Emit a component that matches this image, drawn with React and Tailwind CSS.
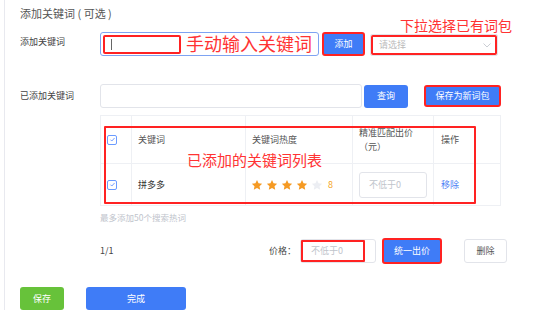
import React from "react";

const Star = ({ fill }) => (
  <svg width="12" height="12" viewBox="0 0 24 24">
    <path
      d="M12 1.8l3.1 6.6 7.2.9-5.3 5 1.4 7.1L12 17.9l-6.4 3.5 1.4-7.1-5.3-5 7.2-.9z"
      fill={fill}
    />
  </svg>
);

const Check = () => (
  <div className="w-[10px] h-[10px] rounded-[2px] border border-[#6b9bff] flex items-center justify-center bg-white">
    <svg width="7" height="7" viewBox="0 0 10 10">
      <path d="M2 5.2l2 2 4-4.4" stroke="#5b8cff" strokeWidth="1.2" fill="none" />
    </svg>
  </div>
);

export default function App() {
  return (
    <div
      className="w-[537px] h-[310px] overflow-hidden bg-white relative text-[#333]"
      style={{ fontFamily: '"Noto Sans CJK SC", "Noto Sans", sans-serif' }}
    >
      <div className="ml-[4px] h-full border-l border-[#e8e9ef] pl-[15px] flex flex-col">
        {/* title */}
        <div className="h-[26px] pt-[4px] text-[11px] leading-[16px] text-[#555] flex items-center whitespace-pre">
          添加关键词 ( 可选 )
        </div>

        {/* row 1 */}
        <div className="mt-[10px] flex items-start h-[24px]">
          <div className="w-[80px] pt-[3px] text-[9px] leading-[14px] text-[#444]">添加关键词</div>
          <div className="relative w-[219px] h-[24px] rounded-[3px] border border-[#7ea3f2] bg-white">
            <div className="absolute left-[2px] top-[2px] w-[78px] h-[19px] border-2 border-[#f22] rounded-[2px]" />
            <div className="absolute left-[10px] top-[6px] w-px h-[11px] bg-[#666]" />
            <div className="absolute left-[85px] top-[0px] text-[18px] leading-[21px] text-[#f33] whitespace-nowrap">
              手动输入关键词
            </div>
          </div>
          <div className="ml-[3px] w-[43px] h-[24px] rounded-[3px] bg-[#3f7cf7] border-2 border-[#f22] text-white text-[9px] flex items-center justify-center">
            添加
          </div>
          <div className="relative ml-[5px] mt-[2px] w-[128px] h-[22px] rounded-[2px] border border-[#e2e4ea] bg-white flex items-center pl-[8px] text-[9px] text-[#bbb]">
            <div className="absolute inset-0 border-2 border-[#f22] rounded-[2px]" />
            请选择
            <svg className="absolute right-[6px] top-[8px]" width="8" height="5" viewBox="0 0 8 5">
              <path d="M0.5 0.5l3.5 3.5 3.5-3.5" stroke="#c5c8cf" strokeWidth="0.9" fill="none" />
            </svg>
            <div className="absolute left-[29px] top-[-19px] text-[14px] leading-[18px] text-[#f33] whitespace-nowrap">
              下拉选择已有词包
            </div>
          </div>
        </div>

        {/* row 2 */}
        <div className="mt-[28px] flex items-center h-[24px]">
          <div className="w-[80px] text-[9px] leading-[14px] text-[#444]">已添加关键词</div>
          <div className="w-[262px] h-[24px] rounded-[3px] border border-[#e2e4ea] bg-white" />
          <div className="ml-[2px] w-[44px] h-[23px] rounded-[3px] bg-[#3f7cf7] text-white text-[9px] flex items-center justify-center">
            查询
          </div>
          <div className="ml-[16px] w-[77px] h-[22px] rounded-[3px] bg-[#3f7cf7] border-2 border-[#f22] text-white text-[9px] flex items-center justify-center">
            保存为新词包
          </div>
        </div>

        {/* table */}
        <div className="relative mt-[7px] ml-[80px] w-[401px] border border-[#eef0f4] text-[9px]">
          <div className="flex h-[48px] border-b border-[#eef0f4] text-[#555]">
            <div className="w-[31px] border-r border-[#eef0f4] flex items-center pl-[6px]">
              <Check />
            </div>
            <div className="w-[114px] border-r border-[#eef0f4] flex items-center pl-[6px]">关键词</div>
            <div className="w-[107px] border-r border-[#eef0f4] flex items-center pl-[6px]">关键词热度</div>
            <div className="w-[81px] border-r border-[#eef0f4] flex flex-col justify-center pl-[6px] leading-[14px]">
              <div>精准匹配出价</div>
              <div>（元）</div>
            </div>
            <div className="flex-1 flex items-center pl-[7px]">操作</div>
          </div>
          <div className="flex h-[41px]">
            <div className="w-[31px] border-r border-[#eef0f4] flex items-center pl-[6px]">
              <Check />
            </div>
            <div className="w-[114px] border-r border-[#eef0f4] flex items-center pl-[6px] text-[#333]">拼多多</div>
            <div className="w-[107px] border-r border-[#eef0f4] flex items-center pl-[5px] gap-[3px]">
              <Star fill="#f59a23" />
              <Star fill="#f59a23" />
              <Star fill="#f59a23" />
              <Star fill="#f59a23" />
              <Star fill="#eceef3" />
              <span className="ml-[2px] text-[#f5a623]">8</span>
            </div>
            <div className="w-[81px] border-r border-[#eef0f4] flex items-center pl-[6px]">
              <div className="w-[68px] h-[26px] rounded-[3px] border border-[#e2e4ea] flex items-center pl-[9px] text-[#c0c4cc]">
                不低于0
              </div>
            </div>
            <div className="flex-1 flex items-center pl-[7px] text-[#4a7ef5]">移除</div>
          </div>
          <div className="absolute left-[3px] top-[10px] w-[372px] h-[78px] border-2 border-[#f22] rounded-[1px]" />
          <div className="absolute left-[86px] top-[35px] text-[15px] leading-[18px] text-[#f33] whitespace-nowrap">
            已添加的关键词列表
          </div>
        </div>

        <div className="mt-[4px] ml-[80px] text-[8.5px] leading-[14px] text-[#c0c4cc]">最多添加50个搜索热词</div>

        {/* pagination / price row */}
        <div className="mt-[14px] ml-[80px] flex items-center h-[26px]">
          <div className="w-[169px] text-[9px] text-[#444]">1/1</div>
          <div className="text-[9px] text-[#444]">价格：</div>
          <div className="relative ml-[4px] w-[76px] h-[24px] rounded-[3px] border border-[#e2e4ea] flex items-center pl-[10px] text-[9px] text-[#c0c4cc]">
            <div className="absolute left-0 top-0 w-[64px] h-[22px] border-2 border-[#f22] rounded-[1px]" />
            不低于0
          </div>
          <div className="ml-[6px] w-[60px] h-[26px] rounded-[3px] bg-[#3f7cf7] border-2 border-[#f22] text-white text-[9px] flex items-center justify-center">
            统一出价
          </div>
          <div className="ml-[22px] w-[43px] h-[24px] rounded-[3px] border border-[#e2e4ea] text-[#555] text-[9px] flex items-center justify-center">
            删除
          </div>
        </div>

        {/* bottom buttons */}
        <div className="mt-[23px] flex items-center">
          <div className="w-[44px] h-[23px] rounded-[3px] bg-[#67c23a] text-white text-[9px] flex items-center justify-center">
            保存
          </div>
          <div className="ml-[22px] w-[100px] h-[23px] rounded-[3px] bg-[#3f7cf7] text-white text-[9px] flex items-center justify-center">
            完成
          </div>
        </div>
      </div>
    </div>
  );
}
